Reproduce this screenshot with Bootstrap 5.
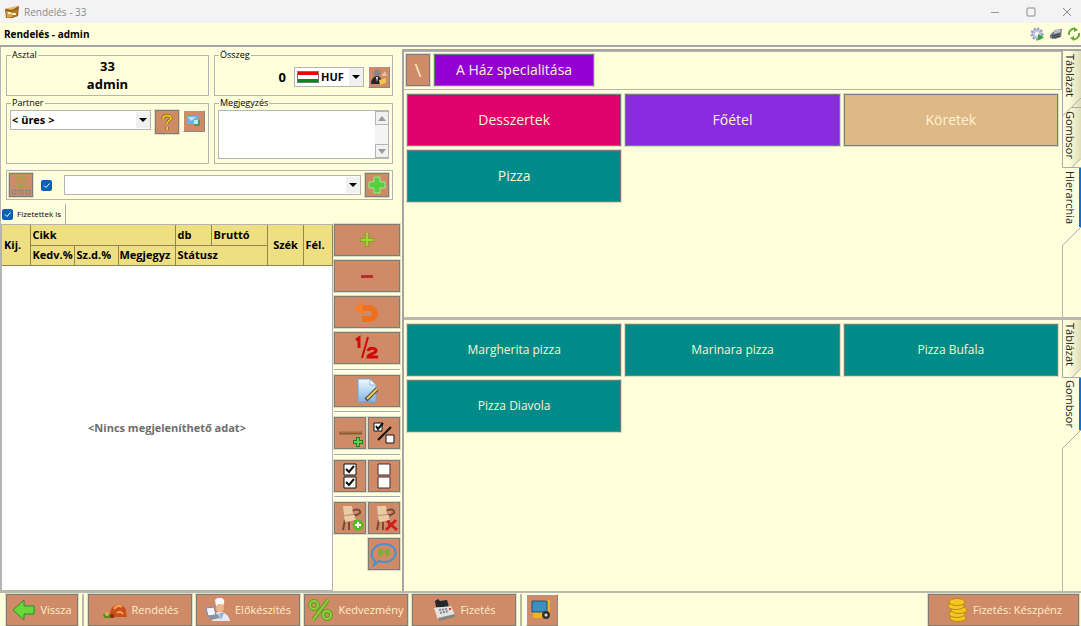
<!DOCTYPE html>
<html lang="hu">
<head>
<meta charset="utf-8">
<meta name="viewport" content="width=device-width, initial-scale=1">
<title>Rendelés - 33</title>
<link href="https://cdn.jsdelivr.net/npm/bootstrap@5.3.0/dist/css/bootstrap.min.css" rel="stylesheet">
<style>
:root{--cream:#ffffdc;--clay:#cf8a67;--line:#b4b4b0;--dark:#7d7d78;--tan:#efdf83;--teal:#008b8b}
body{font-family:"Open Sans","Noto Sans",sans-serif;font-size:11px;line-height:16px;color:#000;background:var(--cream);height:100vh;min-height:600px;overflow:hidden}
.titlebar{height:23px;background:#f3f3f3;color:#8a8a8a;font-size:10px}
.subbar{height:24px;border-bottom:2px solid #a5a5a5;font-weight:700;font-size:10px}
.iconbtn{border:0;background:none;padding:0;display:flex}
.workarea,.paid-row{min-height:0}
.leftcol{width:402px;border-left:1px solid var(--line)}
.group{position:relative;border:1px solid var(--line);min-width:0}
.group legend{position:absolute;top:-7px;left:4px;float:none;width:auto;margin:0;padding:0 1px;font-size:9px;line-height:12px;background:var(--cream)}
.forms{display:grid;grid-template-columns:203px 179px;grid-template-rows:41px 61px;gap:7px 5px;padding:8px 0 6px 5px}
.who{font-size:13px;line-height:18px;font-weight:700}
.who div{padding-top:1px}
.clay{background:var(--clay);border:1px solid var(--dark);border-radius:0;color:#ffeecb;padding:0;display:flex;align-items:center;justify-content:center;outline:1px solid #dcdcc6;font-size:11px}
.raised{border-color:#fff #8a8a84 #8a8a84 #fff;outline:0}
.sq{width:24px;height:24px;flex:none}
.sqs{width:22px;height:22px;flex:none}
.combo{appearance:none;height:20px;border:1px solid var(--line);border-radius:0;font-weight:700;font-size:11px;line-height:16px;color:#000;padding:0 16px 0 1px;min-width:0;
background:#fff url("data:image/svg+xml,%3Csvg xmlns='http://www.w3.org/2000/svg' width='14' height='16'%3E%3Crect width='14' height='16' fill='%23f0f0f0'/%3E%3Cpath d='M3 6h8l-4 4z'/%3E%3C/svg%3E") no-repeat right center}
.money{width:70px;padding-left:26px;background-image:url("data:image/svg+xml,%3Csvg xmlns='http://www.w3.org/2000/svg' width='22' height='12'%3E%3Crect width='22' height='12' fill='%23777'/%3E%3Cpath fill='%23f00000' d='M1 1h20v3H1z'/%3E%3Cpath fill='%23fff' d='M1 4h20v4H1z'/%3E%3Cpath fill='%23008a20' d='M1 8h20v3H1z'/%3E%3C/svg%3E"),url("data:image/svg+xml,%3Csvg xmlns='http://www.w3.org/2000/svg' width='14' height='18'%3E%3Crect width='14' height='18' fill='%23f0f0f0'/%3E%3Cpath d='M3 7h8l-4 4z'/%3E%3C/svg%3E");background-position:2px center,right center}
.sumrow{padding:2px 2px 0 0}
.partner{padding:6px 3px 0 3px}
.notebox{padding:6px 3px 0}
.note{height:49px;resize:none;border:1px solid var(--line);border-radius:0;padding:2px 16px 2px 3px;font-size:11px;background:#fff;overflow:hidden;display:block;width:100%}
.scroller{position:absolute;right:3px;top:6px;width:14px;height:49px;background:#f4f4f4;border:solid var(--line);border-width:1px 1px 1px 0}
.scroller button{height:14px;width:14px;border:1px solid var(--line);background:#f0f0f0;padding:0;display:flex;align-items:center;justify-content:center}
.tick{appearance:none;width:11px;height:11px;margin:0;border-radius:2px;flex:none;background:#0a5fb8 url("data:image/svg+xml,%3Csvg xmlns='http://www.w3.org/2000/svg' width='11' height='11'%3E%3Cpath d='M3 5.5l2 2 3.500-4' fill='none' stroke='%23fff'/%3E%3C/svg%3E") center}
.filterbar{height:30px;margin-left:5px;width:387px;padding:0 3px 0 2px;border:1px solid var(--line)}
.paid{height:20px;width:65px;padding-left:1px;border-right:1px solid #a9a9a5;box-shadow:inset 0 1px #fff;font-size:8px}
.gridwrap{width:332px;margin-right:1px;border:1px solid var(--line);background:#fff}
.cols{table-layout:fixed;width:330px;border-collapse:collapse;font-weight:700}
.cols th{background:var(--tan);border-right:1px solid #8f8650;border-bottom:1px solid #8f8650;height:20px;padding:0 1px 0 2px;line-height:18px;white-space:nowrap}
.cols .tight{padding:0 0 0 1px}
.empty{color:#6d6d6d;font-weight:700}
.tools{width:66px;display:grid;grid-template-columns:32px 32px;grid-template-rows:repeat(4,32px) 3px 32px 2px 32px 3px 32px 2px 32px 32px;gap:4px 2px;align-content:start}
.tools .wide{grid-column:span 2}
.tools hr{grid-column:span 2;height:2px;margin:0;align-self:center;border:0;border-bottom:1px solid #fff;background:#a9a9a5;opacity:1}
.rightcol{border-left:2px solid #a5a5a5;min-width:0;margin-top:2px}
.pane-a{flex:267 1 0;border-top:2px solid #a5a5a5;min-height:0}
.pane-b{flex:273 1 0;border-top:3px solid #b9b9b0;min-height:0}
.crumbs{height:39px;padding:2px;border:1px solid var(--line);border-left:0}
.tiles{display:grid;grid-template-columns:repeat(3,1fr);grid-auto-rows:52px;gap:4px;padding:4px 4px 0 3px}
.tile{border:1px solid #6f7f78;border-radius:0;color:#fff3cf;background:var(--teal);font-size:12px;line-height:16px;padding:0;outline:1px solid #dcdcc6}
.tile-lg,.crumb{font-size:14px}
.crumb{height:32px}
.crumb-root{font-size:18px}
.crumb-name{width:160px}
.bg-violet{background:#9400d3}.bg-pink{background:#e0006e}.bg-purple{background:#8a2be2}.bg-wood{background:#deb887}
.rail{width:19px;position:relative;flex:none}
.rail svg{position:absolute;left:0;top:0}
.rail button{position:relative;border:0;background:none;padding:3px 0 0;writing-mode:vertical-rl;text-align:left;width:16px;line-height:16px;color:#222}
.rail .after{border-left:1px solid var(--line)}
.h1t{height:57px}.h2t{height:60px}.h3t{height:77px}.h4t{height:71px}
.bottombar{height:35px;border-top:2px solid #b9b9b0;padding:1px 2px 0 6px}
.bottombar .clay{height:32px;gap:4px}
.act{width:104px}
.back{width:72px}
.term{width:32px}
.pay{width:151px}
.vsep{width:2px;height:32px;background:#b9b9b0}
</style>
</head>
<body class="d-flex flex-column">
<header>
  <div class="titlebar d-flex align-items-center">
    <svg class="ms-1 me-1" width="16" height="14"><path d="M1 4l6-1 8-2-1 10-6 2H2z" fill="#8d5a1e"/><path d="M1 4l7 1 7-4-7 1z" fill="#e5b960"/><path d="M2 6l6 1v5l-5 1z" fill="#d9a648"/><path d="M8 6l6-2-1 7-5 1z" fill="#b27a2c"/><path d="M4 8h3M8 9h4" stroke="#fff0c0" stroke-width="2"/></svg>
    <span class="flex-grow-1">Rendelés - 33</span>
    <button class="iconbtn me-4" aria-label="Kis méret"><svg width="12" height="12"><path d="M2 6.500h8" stroke="#999"/></svg></button>
    <button class="iconbtn me-4" aria-label="Teljes méret"><svg width="12" height="12"><rect x="2" y="2" width="8" height="8" rx="1" fill="none" stroke="#8b8b8b"/></svg></button>
    <button class="iconbtn me-2" aria-label="Bezárás"><svg width="12" height="12"><path d="M2 2l8 8M10 2l-8 8" stroke="#8b8b8b"/></svg></button>
  </div>
  <div class="subbar d-flex align-items-center ps-1">
    <span class="flex-grow-1">Rendelés - admin</span>
    <button class="iconbtn me-1" aria-label="Beállítások"><svg width="15" height="14"><circle cx="7" cy="7" r="5" fill="#b6b9dc" stroke="#9a9ec4" stroke-width="3" stroke-dasharray="2 1.300"/><circle cx="7" cy="7" r="4" fill="#c3c6e6"/><circle cx="7" cy="7" r="2" fill="#f4f4ff"/><path d="M8 7l6 3.500-6 3z" fill="#27a829"/></svg></button>
    <button class="iconbtn me-1" aria-label="Nyomtatás"><svg width="14" height="14"><path d="M1 8l5-5 7-1-1 8-6 2-5-1z" fill="#737984"/><path d="M5 4l6-2 1 3-7 2z" fill="#b8bec9"/><path d="M3 9l8-2M3 11l8-2" stroke="#333c48"/></svg></button>
    <button class="iconbtn" aria-label="Frissítés"><svg width="14" height="14" fill="none" stroke="#64a83c" stroke-width="2"><path d="M2 8a5 5 0 0 1 6-6M12 6a5 5 0 0 1-6 6"/><path d="M7 0l4 3-4 2zM7 14l-4-3 4-2z" fill="#64a83c" stroke="none"/></svg></button>
  </div>
</header>

<main class="workarea d-flex flex-grow-1">
  <section class="leftcol d-flex flex-column flex-shrink-0">
    <div class="forms">
      <fieldset class="group text-center who"><legend class="fw-normal">Asztal</legend><div>33<br>admin</div></fieldset>
      <fieldset class="group"><legend>Összeg</legend>
        <div class="sumrow d-flex justify-content-end align-items-center gap-1 h-100">
          <output class="who me-1" aria-label="Összeg">0</output>
          <select class="combo money" aria-label="Pénznem"><option>HUF</option></select>
          <button class="clay raised sqs" aria-label="Ügyfél"><svg width="18" height="18"><circle cx="7" cy="5" r="3.500" fill="#8f8580"/><path d="M1 16c0-5 3-8 6-8s5 3 5 8z" fill="#25272c"/><path d="M6 9h2l-1 5z" fill="#eee"/><path d="M9 12l7-2v5l-6 2z" fill="#f0c653"/><path d="M11 8l4-5 2 5z" fill="#e2c9a4"/></svg></button>
        </div></fieldset>
      <fieldset class="group"><legend>Partner</legend>
        <div class="partner d-flex align-items-start gap-1">
          <select class="combo flex-grow-1" aria-label="Partner"><option>&lt; üres &gt;</option></select>
          <button class="clay sq" aria-label="Súgó"><svg width="16" height="18" fill="none" stroke="#6b5212" stroke-width="3"><path d="M4 6c0-5 8-4 8-1 0 3-4 2-4 6M8 14v3"/><path d="M4 6c0-5 8-4 8-1 0 3-4 2-4 6M8 14v3" stroke="#e8c81c" stroke-width="2"/></svg></button>
          <button class="clay raised sqs" aria-label="Kártya"><svg width="16" height="12"><path d="M1 1h11v8H1z" fill="#6fb0e6"/><path d="M2 2h8l-5 4z" fill="#c3e2f8"/><path d="M8 5h6v6H8z" fill="#4d9a5b"/><path d="M8 5h4v4H8z" fill="#bfe8ff"/></svg></button>
        </div></fieldset>
      <fieldset class="group notebox"><legend>Megjegyzés</legend>
        <textarea class="note" aria-label="Megjegyzés"></textarea>
        <div class="scroller d-flex flex-column justify-content-between">
          <button aria-label="Fel"><svg width="8" height="5"><path d="M0 5l4-5 4 5z" fill="#999"/></svg></button>
          <button aria-label="Le"><svg width="8" height="5"><path d="M0 0l4 5 4-5z" fill="#999"/></svg></button>
        </div></fieldset>
    </div>
    <div class="filterbar d-flex align-items-center">
      <button class="clay sq me-2" aria-label="Szerkezet"><svg width="22" height="22" fill="none"><path d="M7 3h8v7H7zM11 10v3M3 13h16" stroke="#8fae36"/><path d="M2 16h4v4H2zM9 16h4v4H9zM16 16h4v4h-4z" stroke="#6c8aa0"/></svg></button>
      <input class="tick me-2" type="checkbox" checked aria-label="Szűrő">
      <select class="combo flex-grow-1 ms-1 me-1" aria-label="Szűrő lista"><option></option></select>
      <button class="clay sq" aria-label="Hozzáad"><svg width="20" height="20"><path d="M7 2h6v5h5v6h-5v5H7v-5H2V7h5z" fill="#54cf3e" stroke="#a1e790"/></svg></button>
    </div>
    <label class="paid d-flex align-items-center gap-1 mt-1"><input class="tick" type="checkbox" checked>Fizetettek is</label>
    <div class="paid-row d-flex flex-grow-1">
      <div class="gridwrap d-flex flex-column">
        <table class="cols">
          <colgroup><col width="28"><col width="44"><col width="44"><col width="57"><col width="36"><col width="56"><col width="36"><col width="29"></colgroup>
          <thead>
          <tr><th rowspan="2">Kij.</th><th colspan="3">Cikk</th><th>db</th><th>Bruttó</th><th rowspan="2" class="text-center">Szék</th><th rowspan="2">Fél.</th></tr>
          <tr><th>Kedv.%</th><th>Sz.d.%</th><th class="tight">Megjegyz</th><th colspan="2">Státusz</th></tr>
          </thead>
        </table>
        <div class="empty flex-grow-1 d-flex align-items-center justify-content-center">&lt;Nincs megjeleníthető adat&gt;</div>
      </div>
      <div class="tools">
        <button class="clay wide" aria-label="Több"><svg width="16" height="16"><path d="M8 1v14M1 8h14" stroke="#7fa81e" stroke-width="4"/><path d="M8 1v13M2 8h12" stroke="#a0da28" stroke-width="2"/></svg></button>
        <button class="clay wide" aria-label="Kevesebb"><svg width="16" height="16"><path d="M2 8.500h12" stroke="#b92c33" stroke-width="3"/></svg></button>
        <button class="clay wide" aria-label="Visszavonás"><svg width="26" height="24"><path d="M7 8h8c8 0 8 11 0 11H8" fill="none" stroke="#ee6f20" stroke-width="6"/><path d="M0 8l9-8v16z" fill="#f3802e"/></svg></button>
        <button class="clay wide" aria-label="Felezés"><svg width="26" height="26" fill="none" stroke="#d10a0a"><path d="M2 5l3-2v10" stroke-width="3"/><path d="M14 2L8 23" stroke-width="2"/><path d="M14 16c1-4 9-3 8 0-1 3-8 3-8 6h10" stroke-width="3"/></svg></button>
        <hr>
        <button class="clay wide" aria-label="Szerkesztés"><svg width="24" height="26"><defs><linearGradient id="sheet" x2="0" y2="1"><stop stop-color="#f4faff"/><stop offset="1" stop-color="#7fb5e6"/></linearGradient></defs><path d="M3 1h12l6 6v17H3z" fill="url(#sheet)" stroke="#6ba3d8"/><path d="M15 1v6h6z" fill="#fff" stroke="#8bb8de"/><path d="M22 11L11 22" stroke="#4d4a3c" stroke-width="4"/><path d="M22 11L12 21" stroke="#f0cc55" stroke-width="2"/></svg></button>
        <hr>
        <button class="clay" aria-label="Tétel hozzáadása"><svg width="28" height="28"><path d="M3 14h23" stroke="#8a5a2c" stroke-width="3"/><path d="M3 13h23" stroke="#b98750"/><path d="M22 18v10M17 23h10" stroke="#257a2a" stroke-width="4"/><path d="M22 19v8M18 23h8" stroke="#5fd34f" stroke-width="2"/></svg></button>
        <button class="clay" aria-label="Kijelölés váltása"><svg width="26" height="26"><path d="M3 3h8v8H3zM15 15h8v8h-8z" fill="#fff" stroke="#111"/><path d="M5 6l2 3 5-6M7 20L20 7" fill="none" stroke="#111" stroke-width="2"/></svg></button>
        <hr>
        <button class="clay" aria-label="Mindet kijelöli"><svg width="26" height="26"><path d="M7 1h12v11H7zM7 14h12v11H7z" fill="#fff" stroke="#111"/><path d="M9 6l3 3 5-6M9 19l3 3 5-6" fill="none" stroke="#111" stroke-width="2"/></svg></button>
        <button class="clay" aria-label="Kijelölés törlése"><svg width="26" height="26"><path d="M7 1h12v11H7zM7 14h12v11H7z" fill="#fff" stroke="#502828"/></svg></button>
        <hr>
        <button class="clay" aria-label="Szék hozzáadása"><svg width="28" height="28"><path d="M9 16L7 26M13 18v8M19 10v13M16 7c5-3 9-1 8 2l-5 3" fill="none" stroke="#7b4a35" stroke-width="2"/><path d="M7 2h9l1 8-9 1zM8 12l11-1 1 5-11 2z" fill="#e8cca6"/><circle cx="22" cy="21" r="5.500" fill="#54bd1f"/><path d="M22 18v6M19 21h6" stroke="#fff" stroke-width="2"/></svg></button>
        <button class="clay" aria-label="Szék törlése"><svg width="28" height="28"><path d="M9 16L7 26M13 18v8M19 10v13M16 7c5-3 9-1 8 2l-5 3" fill="none" stroke="#7b4a35" stroke-width="2"/><path d="M7 2h9l1 8-9 1zM8 12l11-1 1 5-11 2z" fill="#e8cca6"/><path d="M17 17l10 9M26 16L16 26" stroke="#cf2020" stroke-width="3"/></svg></button>
        <span></span>
        <button class="clay" aria-label="Megjegyzés írása"><svg width="28" height="26"><path d="M5 20C-2 14 3 3 14 3c16 0 15 18 0 18-2 0-3 0-5-1l-5 4z" fill="none" stroke="#4691cf" stroke-width="2"/><path d="M8 8h5v5l-4 4v-4H8zM15 8h5v5l-4 4v-4h-1z" fill="#82ac38"/></svg></button>
      </div>
    </div>
  </section>

  <section class="rightcol flex-grow-1 d-flex flex-column">
    <div class="pane-a d-flex">
      <div class="flex-grow-1">
        <div class="crumbs d-flex gap-1 align-items-start">
          <button class="clay crumb crumb-root sq">\</button>
          <button class="tile crumb crumb-name bg-violet">A Ház specialitása</button>
        </div>
        <div class="tiles">
          <button class="tile tile-lg bg-pink">Desszertek</button>
          <button class="tile tile-lg bg-purple">Főétel</button>
          <button class="tile tile-lg bg-wood">Köretek</button>
          <button class="tile tile-lg">Pizza</button>
        </div>
      </div>
      <nav class="rail d-flex flex-column" aria-label="Csoportnézet">
        <svg width="19" height="195"><defs><linearGradient id="tabfill"><stop offset=".3" stop-color="#ffffdc"/><stop offset="1" stop-color="#deddb9"/></linearGradient></defs>
          <path d="M.5 0v116.500H10.500L19 107V0z" fill="url(#tabfill)"/>
          <path d="M.5 0V116.500H19M19 47L.5 65M10 56.500H19M10 116.500L19 107.500M19 176L.5 194.500" fill="none" stroke="#aaa"/><path d="M18 117v59" stroke="#0f6fd6" stroke-width="2"/></svg>
        <button class="h1t">Táblázat</button><button class="h2t">Gombsor</button><button class="h3t">Hierarchia</button>
        <div class="after flex-grow-1"></div>
      </nav>
    </div>
    <div class="pane-b d-flex">
      <div class="flex-grow-1">
        <div class="tiles">
          <button class="tile">Margherita pizza</button>
          <button class="tile">Marinara pizza</button>
          <button class="tile">Pizza Bufala</button>
          <button class="tile">Pizza Diavola</button>
        </div>
      </div>
      <nav class="rail d-flex flex-column" aria-label="Terméknézet">
        <svg width="19" height="130"><path d="M.5 0V57.500H10L19 48V0z" fill="url(#tabfill)"/><path d="M.5 0V57.500H19M10 57.500L19 48.500M19 110L.5 128.500" fill="none" stroke="#aaa"/><path d="M18 58v52" stroke="#0f6fd6" stroke-width="2"/></svg>
        <button class="h1t">Táblázat</button><button class="h4t">Gombsor</button>
        <div class="after flex-grow-1"></div>
      </nav>
    </div>
  </section>
</main>

<footer class="bottombar d-flex gap-1">
  <button class="clay back"><svg width="24" height="24"><path d="M1 12L12 2v6h10v8H12v6z" fill="#68d839" stroke="#23912d"/></svg>Vissza</button>
  <span class="vsep"></span>
  <button class="clay act"><svg width="26" height="18"><path d="M8 13c0-6 5-10 9-9 5 0 8 4 7 8l1 4H12z" fill="#c9501b"/><path d="M12 8c2-3 5-4 8-2M15 12c2-2 5-1 6 1" fill="none" stroke="#f7a04a" stroke-width="2"/><path d="M1 13h10l2 4H2z" fill="#5a8c24"/><circle cx="5" cy="13" r="2" fill="#e0b13a"/><circle cx="10" cy="15" r="2" fill="#a31a12"/></svg>Rendelés</button>
  <button class="clay act"><svg width="26" height="26"><path d="M10 3c3-4 11-2 9 3l-1 3h-7z" fill="#f7f8ff"/><circle cx="15" cy="11" r="4" fill="#edb58c"/><path d="M7 24c0-7 4-9 8-9s9 3 10 9z" fill="#e4ebf6"/><path d="M14 16l2 7 3-7z" fill="#8fb4dd"/><path d="M1 11l8-1 2 8-8 1z" fill="#f4f6fa" stroke="#5d92ba"/><path d="M3 19l10-2 2 4-9 2z" fill="#8b949c"/></svg>Előkészítés</button>
  <button class="clay act"><svg width="26" height="24" fill="none" stroke="#5f9e22" stroke-width="4"><circle cx="6" cy="7" r="4"/><circle cx="19" cy="17" r="4"/><path d="M20 2L5 22"/><g stroke="#8fd03c" stroke-width="2"><circle cx="6" cy="7" r="4"/><circle cx="19" cy="17" r="4"/><path d="M20 2L5 22"/></g></svg>Kedvezmény</button>
  <button class="clay act"><svg width="24" height="24"><path d="M3 3l3-2 2 2 7-1 2 7H4z" fill="#25282b"/><path d="M2 10l17-2 4 9-17 5z" fill="#e2e2de"/><path d="M6 20l17-4v3L7 23z" fill="#85857f"/><path d="M7 12l9-1M8 15l9-2" stroke="#889" stroke-width="2" stroke-dasharray="2 1"/><path d="M17 11h2" stroke="#c33" stroke-width="2"/></svg>Fizetés</button>
  <span class="vsep"></span>
  <button class="clay raised term" aria-label="Terminál"><svg width="22" height="22"><path d="M12 1h7v18H2v-6h10z" fill="#f0b323"/><path d="M1 2h15v11H1z" fill="#3c8fc2" stroke="#27516d"/><circle cx="15" cy="16" r="4" fill="#333"/><circle cx="15" cy="16" r="1.500" fill="#ddd"/></svg></button>
  <button class="clay pay ms-auto"><svg width="24" height="26" fill="#f4c820" stroke="#b98a0d"><ellipse cx="13" cy="21" rx="8" ry="3.500"/><ellipse cx="12" cy="17" rx="8" ry="3.500"/><ellipse cx="14" cy="13" rx="8" ry="3.500"/><ellipse cx="11" cy="9" rx="8" ry="3.500"/><ellipse cx="12" cy="5" rx="8" ry="3.500"/></svg>Fizetés: Készpénz</button>
</footer>
<script src="https://cdn.jsdelivr.net/npm/bootstrap@5.3.0/dist/js/bootstrap.bundle.min.js"></script>
</body>
</html>
